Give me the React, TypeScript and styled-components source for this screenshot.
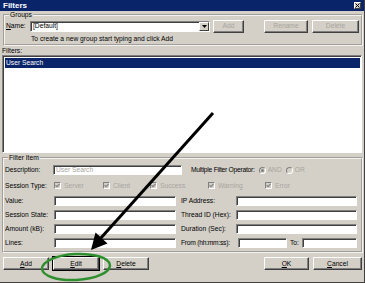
import React from 'react'
import styled, { createGlobalStyle } from 'styled-components'

const GlobalStyle = createGlobalStyle`
  html, body {
    margin: 0;
    padding: 0;
    background: #d4d0c8;
  }
  body {
    font-family: "Liberation Sans", Arial, sans-serif;
    font-size: 6.7px;
    color: #000;
  }
`

const face = '#d4d0c8'

const Dialog = styled.div`
  position: relative;
  width: 365px;
  height: 283px;
  box-sizing: border-box;
  background: ${face};
  border-right: 1px solid #404040;
  border-bottom: 1px solid #404040;
  display: flex;
  flex-direction: column;
  overflow: hidden;
`

const TitleBar = styled.div`
  height: 11px;
  flex: none;
  background: #0a246a;
  color: #fff;
  font-weight: bold;
  font-size: 8px;
  line-height: 11px;
  padding-left: 3px;
  display: flex;
  align-items: center;
  justify-content: space-between;
`

const CloseBox = styled.div`
  width: 7px;
  height: 7px;
  margin-right: 3px;
  background: #d4d0c8;
  border: 1px solid #fff;
  border-right-color: #404040;
  border-bottom-color: #404040;
  box-sizing: border-box;
  display: flex;
  align-items: center;
  justify-content: center;
`

const Body = styled.div`
  flex: 1;
  display: flex;
  flex-direction: column;
  padding: 0 1px 0 2px;
`

const GroupBox = styled.fieldset<{ $pad?: string }>`
  margin: 0;
  padding: ${({ $pad }) => $pad ?? '1px 1px 1px 1px'};
  border: 2px groove #f4f2ee;
  min-width: 0;
`

const Legend = styled.legend`
  font-size: 6.7px;
  line-height: 8px;
  padding: 0 1px;
  margin-left: 3px;
`

const Row = styled.div<{ $h?: number; $gap?: number }>`
  display: flex;
  align-items: center;
  height: ${({ $h }) => $h ?? 12}px;
  gap: ${({ $gap }) => $gap ?? 0}px;
`

const Label = styled.span<{ $w?: number; $ml?: number; $tight?: boolean }>`
  display: inline-block;
  flex: none;
  width: ${({ $w }) => ($w ? `${$w}px` : 'auto')};
  margin-left: ${({ $ml }) => $ml ?? 0}px;
  letter-spacing: ${({ $tight }) => ($tight ? '-0.25px' : 'normal')};
  white-space: nowrap;
  line-height: 8px;
`

const Field = styled.div<{ $w: number; $h?: number; $ml?: number }>`
  flex: none;
  width: ${({ $w }) => $w}px;
  height: ${({ $h }) => $h ?? 10}px;
  margin-left: ${({ $ml }) => $ml ?? 0}px;
  box-sizing: border-box;
  background: #fff;
  border: 1px solid #808080;
  border-right-color: #fff;
  border-bottom-color: #fff;
  box-shadow: inset 1px 1px 0 #404040;
  display: flex;
  align-items: center;
  padding-left: 2px;
  color: ${({ color }) => color ?? '#000'};
  line-height: 8px;
  white-space: nowrap;
  position: relative;
`

const DropButton = styled.div`
  position: absolute;
  right: 0;
  top: 0;
  bottom: 0;
  width: 10px;
  box-sizing: border-box;
  background: ${face};
  border: 1px solid #fff;
  border-right-color: #404040;
  border-bottom-color: #404040;
  display: flex;
  align-items: center;
  justify-content: center;
`

const Button = styled.div<{ $w: number; $ml?: number; $disabled?: boolean; $default?: boolean }>`
  flex: none;
  width: ${({ $w }) => $w}px;
  height: 13px;
  margin-left: ${({ $ml }) => $ml ?? 0}px;
  box-sizing: border-box;
  background: ${face};
  border: 1px solid #fff;
  border-right-color: #404040;
  border-bottom-color: #404040;
  box-shadow: inset -1px -1px 0 #808080;
  outline: ${({ $default }) => ($default ? '1px solid #000' : 'none')};
  display: flex;
  align-items: center;
  justify-content: center;
  color: ${({ $disabled }) => ($disabled ? '#a8a59e' : '#000')};
  line-height: 8px;
`

const Hint = styled.div`
  margin: 3px 0 0 25px;
  line-height: 8px;
  height: 8px;
`

const SectionLabel = styled.div`
  line-height: 8px;
  height: 8px;
  margin-top: 1px;
`

const ListBox = styled.div`
  height: 98px;
  margin-right: 1px;
  box-sizing: border-box;
  background: #fff;
  border: 1px solid #808080;
  border-right-color: #fff;
  border-bottom-color: #fff;
  box-shadow: inset 1px 1px 0 #404040;
  padding: 2px 1px 0 2px;
  margin-bottom: 1px;
`

const ListItem = styled.div<{ $selected?: boolean }>`
  height: 10px;
  line-height: 10px;
  padding-left: 1px;
  background: ${({ $selected }) => ($selected ? '#0a246a' : 'transparent')};
  color: ${({ $selected }) => ($selected ? '#fff' : '#000')};
`

const Grid = styled.div`
  display: grid;
  grid-template-columns: 49px 122px 5px 55px 121px;
  grid-auto-rows: 10px;
  row-gap: 4px;
  align-items: center;
`

const CheckItem = styled.div<{ $w: number }>`
  flex: none;
  width: ${({ $w }) => $w}px;
  display: flex;
  align-items: center;
  gap: 3px;
  color: #a8a59e;
  line-height: 8px;
`

const CheckBox = styled.div`
  width: 7px;
  height: 7px;
  box-sizing: border-box;
  background: ${face};
  border: 1px solid #808080;
  border-right-color: #fff;
  border-bottom-color: #fff;
  display: flex;
  align-items: center;
  justify-content: center;
`

const Radio = styled.div<{ $on?: boolean }>`
  width: 7px;
  height: 7px;
  box-sizing: border-box;
  border-radius: 50%;
  background: ${face};
  border: 1px solid #808080;
  border-right-color: #fff;
  border-bottom-color: #fff;
  display: flex;
  align-items: center;
  justify-content: center;
  &::after {
    content: "";
    width: 3px;
    height: 3px;
    border-radius: 50%;
    background: ${({ $on }) => ($on ? '#808080' : 'transparent')};
  }
`

const RadioItem = styled.div`
  display: flex;
  align-items: center;
  gap: 2px;
  color: #a8a59e;
  margin-left: 4px;
  line-height: 8px;
`

const SplitCell = styled.div`
  display: flex;
  align-items: center;
  height: 10px;
`

const Footer = styled.div`
  display: flex;
  align-items: center;
  gap: 4px;
  padding: 4px 0 0 1px;
`

const Spacer = styled.div`
  flex: 1;
`

const Overlay = styled.svg`
  position: absolute;
  left: 0;
  top: 0;
  pointer-events: none;
`

const U = styled.span`
  text-decoration: underline;
`

function Check() {
  return (
    <svg width="5" height="5" viewBox="0 0 5 5">
      <path d="M0.5 2.2 L2 3.7 L4.6 0.8" stroke="#808080" strokeWidth="1.1" fill="none" />
    </svg>
  )
}

const sessionTypes = [
  { label: 'Server', w: 49 },
  { label: 'Client', w: 47 },
  { label: 'Success', w: 58 },
  { label: 'Warning', w: 57 },
  { label: 'Error', w: 40 },
]

export default function App() {
  return (
    <>
      <GlobalStyle />
      <Dialog>
        <TitleBar>
          <span>Filters</span>
          <CloseBox>
            <svg width="5" height="5" viewBox="0 0 5 5">
              <path d="M0.5 0.5 L4.5 4.5 M4.5 0.5 L0.5 4.5" stroke="#000" strokeWidth="1" />
            </svg>
          </CloseBox>
        </TitleBar>
        <Body>
          <GroupBox style={{ marginLeft: 1 }} $pad="1px 1px 1px 1px">
            <Legend>Groups</Legend>
            <Row>
              <Label $w={24}>
                <U>N</U>ame:
              </Label>
              <Field $w={180} $h={11}>
                [Default]
                <DropButton>
                  <svg width="5" height="3" viewBox="0 0 5 3">
                    <path d="M0 0 H5 L2.5 3 Z" fill="#000" />
                  </svg>
                </DropButton>
              </Field>
              <Button $w={31} $ml={3} $disabled>Add</Button>
              <Button $w={44} $ml={20} $disabled>Rename</Button>
              <Button $w={47} $ml={4} $disabled>Delete</Button>
            </Row>
            <Hint>To create a new group start typing and click Add</Hint>
          </GroupBox>
          <SectionLabel>Filters:</SectionLabel>
          <ListBox>
            <ListItem $selected>User Search</ListItem>
          </ListBox>
          <GroupBox $pad="3px 1px 3px 1px">
            <Legend>Filter Item</Legend>
            <Row $h={10}>
              <Label $w={48}>Description:</Label>
              <Field $w={129} color="#a8a59e">User Search</Field>
              <Label $ml={9} $tight>Multiple Filter Operator:</Label>
              <RadioItem>
                <Radio $on />
                AND
              </RadioItem>
              <RadioItem>
                <Radio />
                OR
              </RadioItem>
            </Row>
            <Row $h={13} style={{ marginTop: 4, marginBottom: 4 }}>
              <Label $w={49}>Session Type:</Label>
              {sessionTypes.map((t) => (
                <CheckItem key={t.label} $w={t.w}>
                  <CheckBox>
                    <Check />
                  </CheckBox>
                  {t.label}
                </CheckItem>
              ))}
            </Row>
            <Grid>
              <Label>Value:</Label>
              <Field $w={122} />
              <span />
              <Label>IP Address:</Label>
              <Field $w={121} />

              <Label>Session State:</Label>
              <Field $w={122} />
              <span />
              <Label>Thread ID (Hex):</Label>
              <Field $w={121} />

              <Label>Amount (kB):</Label>
              <Field $w={122} />
              <span />
              <Label>Duration (Sec):</Label>
              <Field $w={121} />

              <Label>Lines:</Label>
              <Field $w={122} />
              <span />
              <Label $tight>From (hh:mm:ss):</Label>
              <SplitCell>
                <Field $w={49} $ml={2} />
                <Label $w={12} $ml={3}>To:</Label>
                <Field $w={55} />
              </SplitCell>
            </Grid>
          </GroupBox>
          <Footer>
            <Button $w={46}>
              <U>A</U>dd
            </Button>
            <Button $w={46} $default>
              <U>E</U>dit
            </Button>
            <Button $w={46}>
              <U>D</U>elete
            </Button>
            <Spacer />
            <Button $w={45}>
              <U>O</U>K
            </Button>
            <Button $w={49} style={{ marginRight: 1 }}>
              <U>C</U>ancel
            </Button>
          </Footer>
        </Body>
        <Overlay width="365" height="283" viewBox="0 0 365 283">
          <line x1="213" y1="113" x2="100" y2="239" stroke="#000" strokeWidth="3" />
          <polygon points="91,250 95.5,232.5 107.5,243.5" fill="#000" />
          <ellipse
            cx="76"
            cy="267"
            rx="34"
            ry="13"
            fill="none"
            stroke="#2f8f2f"
            strokeWidth="2.5"
            transform="rotate(-3 76 267)"
          />
        </Overlay>
      </Dialog>
    </>
  )
}
